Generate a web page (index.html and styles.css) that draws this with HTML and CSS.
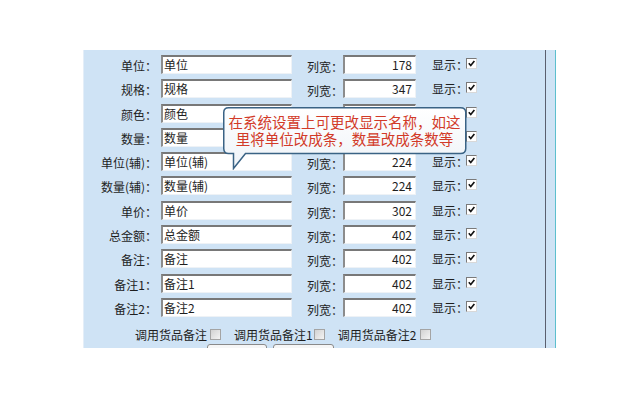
FILE: index.html
```html
<!DOCTYPE html>
<html lang="zh-CN">
<head>
<meta charset="utf-8">
<title>列设置</title>
<link rel="stylesheet" href="styles.css">
</head>
<body>
<div class="panel">
  <div class="content">
    <div class="rows">
      <div class="row"><span class="lbl">单位：</span><span class="field name">单位</span><span class="lbl2">列宽：</span><span class="field width">178</span><span class="lbl3">显示：</span><span class="cb on"><svg viewBox="0 0 11 11"><path d="M2.2 5.2 L4.6 8 L9 2.4"/></svg></span></div>
      <div class="row"><span class="lbl">规格：</span><span class="field name">规格</span><span class="lbl2">列宽：</span><span class="field width">347</span><span class="lbl3">显示：</span><span class="cb on"><svg viewBox="0 0 11 11"><path d="M2.2 5.2 L4.6 8 L9 2.4"/></svg></span></div>
      <div class="row"><span class="lbl">颜色：</span><span class="field name">颜色</span><span class="lbl2"></span><span class="field width"></span><span class="lbl3"></span><span class="cb on"><svg viewBox="0 0 11 11"><path d="M2.2 5.2 L4.6 8 L9 2.4"/></svg></span></div>
      <div class="row"><span class="lbl">数量：</span><span class="field name">数量</span><span class="lbl2"></span><span class="field width"></span><span class="lbl3"></span><span class="cb on"><svg viewBox="0 0 11 11"><path d="M2.2 5.2 L4.6 8 L9 2.4"/></svg></span></div>
      <div class="row"><span class="lbl">单位(辅)：</span><span class="field name">单位(辅)</span><span class="lbl2">列宽：</span><span class="field width">224</span><span class="lbl3">显示：</span><span class="cb on"><svg viewBox="0 0 11 11"><path d="M2.2 5.2 L4.6 8 L9 2.4"/></svg></span></div>
      <div class="row"><span class="lbl">数量(辅)：</span><span class="field name">数量(辅)</span><span class="lbl2">列宽：</span><span class="field width">224</span><span class="lbl3">显示：</span><span class="cb on"><svg viewBox="0 0 11 11"><path d="M2.2 5.2 L4.6 8 L9 2.4"/></svg></span></div>
      <div class="row"><span class="lbl">单价：</span><span class="field name">单价</span><span class="lbl2">列宽：</span><span class="field width">302</span><span class="lbl3">显示：</span><span class="cb on"><svg viewBox="0 0 11 11"><path d="M2.2 5.2 L4.6 8 L9 2.4"/></svg></span></div>
      <div class="row"><span class="lbl">总金额：</span><span class="field name">总金额</span><span class="lbl2">列宽：</span><span class="field width">402</span><span class="lbl3">显示：</span><span class="cb on"><svg viewBox="0 0 11 11"><path d="M2.2 5.2 L4.6 8 L9 2.4"/></svg></span></div>
      <div class="row"><span class="lbl">备注：</span><span class="field name">备注</span><span class="lbl2">列宽：</span><span class="field width">402</span><span class="lbl3">显示：</span><span class="cb on"><svg viewBox="0 0 11 11"><path d="M2.2 5.2 L4.6 8 L9 2.4"/></svg></span></div>
      <div class="row"><span class="lbl">备注1：</span><span class="field name">备注1</span><span class="lbl2">列宽：</span><span class="field width">402</span><span class="lbl3">显示：</span><span class="cb on"><svg viewBox="0 0 11 11"><path d="M2.2 5.2 L4.6 8 L9 2.4"/></svg></span></div>
      <div class="row"><span class="lbl">备注2：</span><span class="field name">备注2</span><span class="lbl2">列宽：</span><span class="field width">402</span><span class="lbl3">显示：</span><span class="cb on"><svg viewBox="0 0 11 11"><path d="M2.2 5.2 L4.6 8 L9 2.4"/></svg></span></div>
    </div>
    <div class="opts">
      <span class="opt">调用货品备注</span><span class="cb off first"></span>
      <span class="opt second">调用货品备注1</span><span class="cb off mid"></span>
      <span class="opt third">调用货品备注2</span><span class="cb off last"></span>
    </div>
    <div class="btns"><span class="btn"></span><span class="btn wide"></span></div>
    <div class="tip">
      <svg class="tip-shape" viewBox="0 0 244 63" width="244" height="63">
        <defs>
          <linearGradient id="tg" x1="0" y1="0" x2="0" y2="1">
            <stop offset="0" stop-color="#ffffff"/>
            <stop offset="1" stop-color="#eef3f8"/>
          </linearGradient>
        </defs>
        <path d="M5.5 0.75 H237.5 Q242.75 0.75 242.75 5.5 V41.5 Q242.75 46.5 237.5 46.5 H22.5 L10.5 61.5 V46.5 H5.5 Q0.75 46.5 0.75 41.5 V5.5 Q0.75 0.75 5.5 0.75 Z" fill="url(#tg)" stroke="#3a6385" stroke-width="1.5"/>
      </svg>
      <div class="tip-text">在系统设置上可更改显示名称，如这<br>里将单位改成条，数量改成条数等</div>
    </div>
  </div>
  <div class="side"></div>
</div>
</body>
</html>
```

FILE: styles.css
```css
html, body {
  margin: 0;
  padding: 0;
  background: #ffffff;
}

body {
  font-family: "Noto Sans CJK SC", "Liberation Sans", sans-serif;
  font-size: 12px;
  color: #1e1e1e;
}

.panel {
  display: flex;
  margin: 50px 0 0 83px;
  width: 473px;
  height: 298px;
  overflow: hidden;
  background: #cfe3f5;
  border-right: 1px solid #5cbfce;
  box-sizing: border-box;
}

.content {
  position: relative;
  width: 462px;
  flex: none;
  border-left: 1px solid #e4eef8;
  box-sizing: border-box;
  padding-top: 5px;
}

.side {
  flex: 1;
  border-left: 1px solid #5a5f6e;
}

.rows {
  display: flex;
  flex-direction: column;
}

.row {
  display: flex;
  align-items: flex-start;
  height: 24.3px;
}

.lbl {
  width: 73px;
  margin-right: 4px;
  text-align: right;
  line-height: 19px;
  margin-top: 1px;
  white-space: nowrap;
}

.field {
  display: block;
  height: 19px;
  box-sizing: border-box;
  background: #ffffff;
  border-top: 2px solid #787878;
  border-left: 2px solid #8c8c8c;
  border-right: 1px solid #eef2f6;
  border-bottom: 1px solid #eef2f6;
  line-height: 16px;
  white-space: nowrap;
  overflow: hidden;
}

.name {
  width: 131px;
  padding-left: 1px;
}

.width {
  width: 73px;
  text-align: right;
  padding-right: 3px;
}

.lbl2 {
  width: 36px;
  margin-left: 15px;
  line-height: 19px;
  margin-top: 2px;
  white-space: nowrap;
}

.lbl3 {
  width: 36px;
  margin-left: 16px;
  line-height: 19px;
  white-space: nowrap;
}

.cb {
  display: block;
  width: 11px;
  height: 11px;
  box-sizing: border-box;
  flex: none;
}

.cb.on {
  margin-left: -2px;
  margin-top: 3px;
  background: #ffffff;
  border-top: 1px solid #7a7a7a;
  border-left: 1px solid #7a7a7a;
  border-right: 1px solid #d8d8d8;
  border-bottom: 1px solid #d8d8d8;
}

.cb.on svg {
  display: block;
  width: 9px;
  height: 9px;
}

.cb.on svg path {
  fill: none;
  stroke: #111111;
  stroke-width: 2;
}

.opts {
  display: flex;
  align-items: center;
  height: 19px;
  margin-top: 3px;
  padding-left: 51px;
  line-height: 19px;
}

.opt {
  white-space: nowrap;
}

.cb.off {
  border: 1px solid #a4a4a4;
  background: linear-gradient(135deg, #d2d2d2, #f4f4f4);
}

.cb.first { margin-left: 3px; }
.opt.second { margin-left: 13px; }
.cb.mid { margin-left: 1px; }
.opt.third { margin-left: 13px; }
.cb.last { margin-left: 4px; }

.btns {
  display: flex;
  gap: 6px;
  padding-left: 123px;
  margin-top: 0;
}

.btn {
  display: block;
  width: 60px;
  height: 22px;
  box-sizing: border-box;
  border: 1px solid #8a8a8a;
  border-radius: 3px;
  background: #f6f6f6;
}

.btn.wide {
  width: 61px;
}

.tip {
  position: absolute;
  left: 139px;
  top: 57px;
  width: 244px;
  height: 63px;
}

.tip-shape {
  position: absolute;
  left: 0;
  top: 0;
}

.tip-text {
  position: relative;
  padding-top: 7px;
  text-align: center;
  width: 243px;
  font-size: 14.5px;
  line-height: 16.5px;
  color: #d23a28;
  white-space: nowrap;
}
```
